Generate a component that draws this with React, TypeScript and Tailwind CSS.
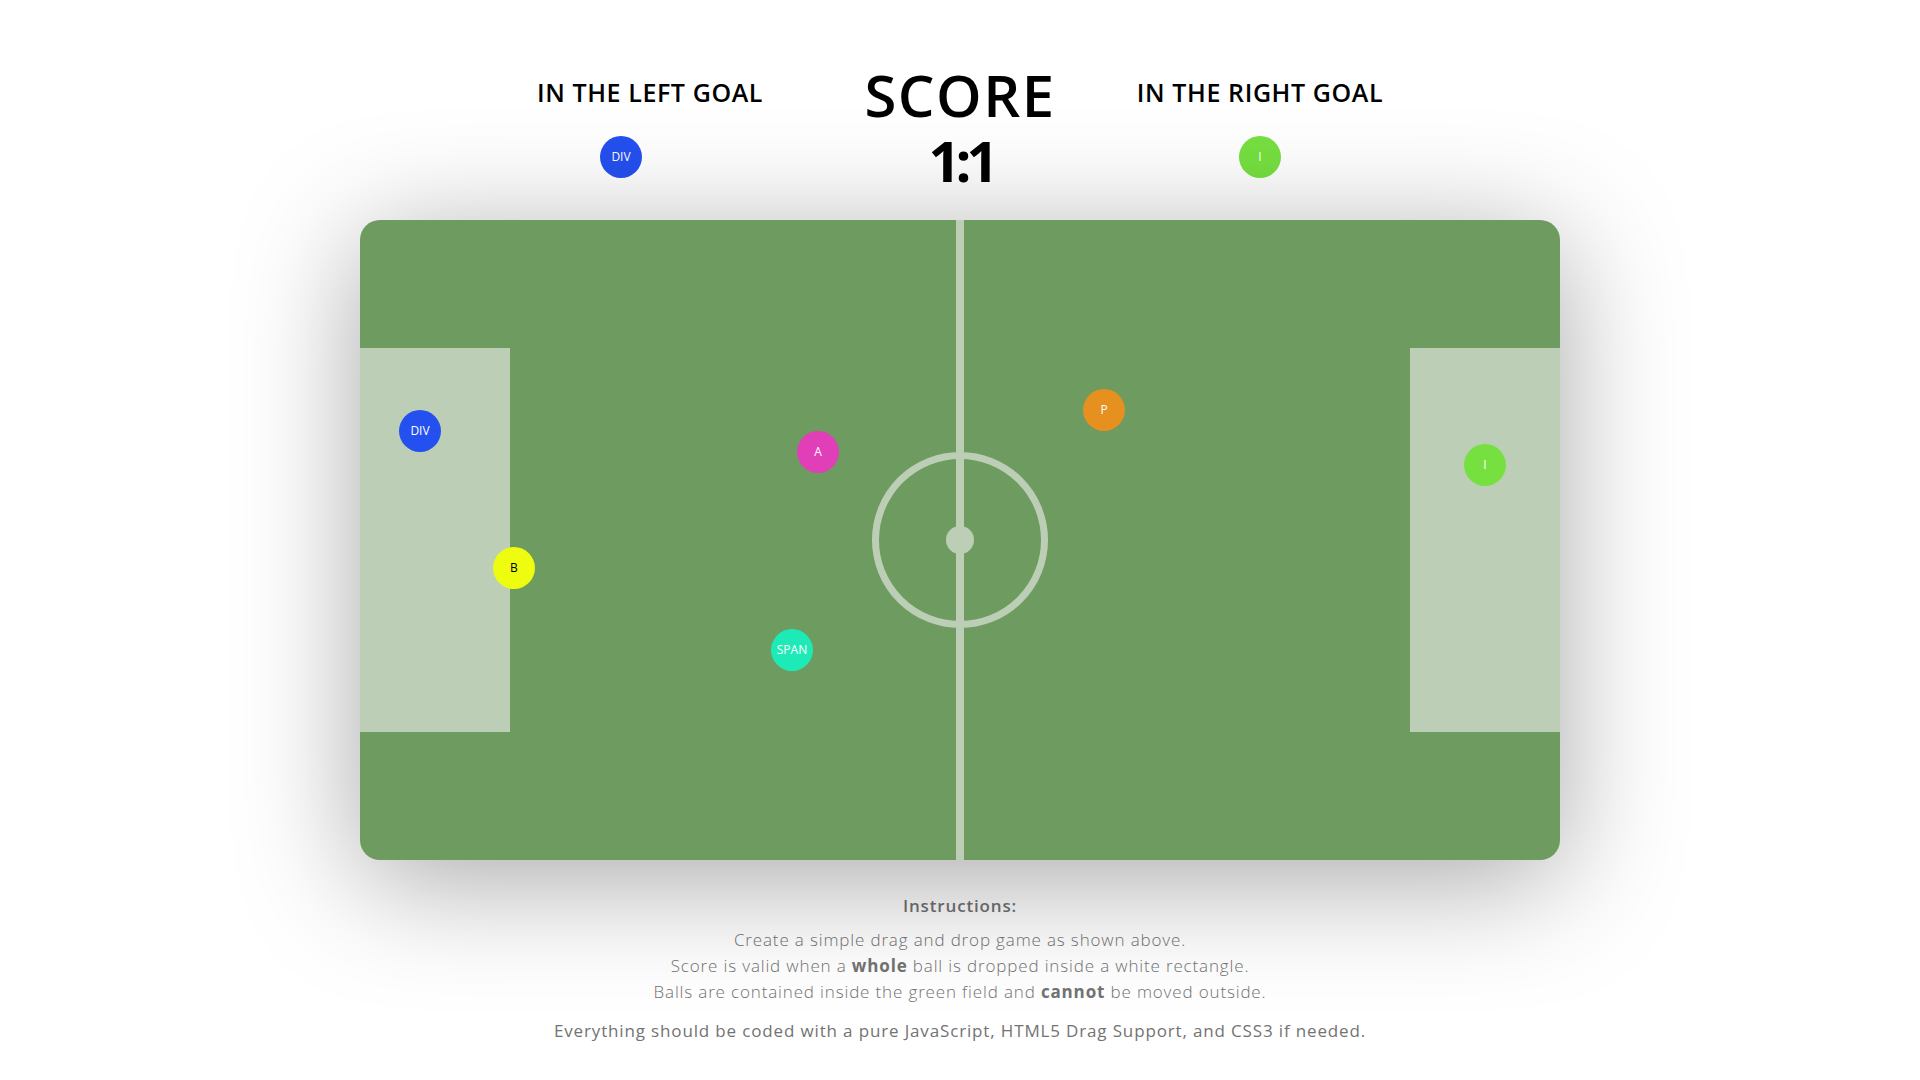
const balls = [
  { label: "DIV", cls: "left-[39px] top-[190px] bg-[#2450f0] text-white" },
  { label: "A", cls: "left-[437px] top-[211px] bg-[#e03fb8] text-white" },
  { label: "P", cls: "left-[723px] top-[169px] bg-[#e6901f] text-white" },
  { label: "I", cls: "left-[1104px] top-[224px] bg-[#76e040] text-white" },
  { label: "B", cls: "left-[133px] top-[327px] bg-[#eefc10] text-black" },
  { label: "SPAN", cls: "left-[411px] top-[409px] bg-[#1eeab8] text-white" },
];

const ballBase =
  "flex items-center justify-center w-[42px] h-[42px] rounded-full text-[12px] font-['Open_Sans',sans-serif]";

const App = () => {
  return (
    <div className="min-h-screen w-full bg-white flex flex-col items-center font-['Open_Sans',sans-serif] text-black">
      <header className="flex items-start pt-[66px] pr-[20px]">
        <div className="w-[310px] flex flex-col items-center pt-[14px]">
          <h2 className="text-[25px] leading-none font-semibold tracking-[0.6px]">IN THE LEFT GOAL</h2>
          <div className={`${ballBase} mt-[31px] mr-[58px] bg-[#2450f0] text-white`}>DIV</div>
        </div>
        <div className="w-[310px] flex flex-col items-center">
          <h1 className="text-[58px] leading-none font-semibold tracking-[1.5px]">SCORE</h1>
          <div className="text-[56px] leading-none font-bold tracking-[-5px] mt-[8px] pl-[2px]">1:1</div>
        </div>
        <div className="w-[290px] flex flex-col items-center pt-[14px]">
          <h2 className="text-[25px] leading-none font-semibold tracking-[0.6px]">IN THE RIGHT GOAL</h2>
          <div className={`${ballBase} mt-[31px] bg-[#76e040] text-white`}>I</div>
        </div>
      </header>

      <main className="relative mt-[32px] w-[1200px] h-[640px] rounded-[20px] bg-[#6e9b5f] overflow-hidden shadow-[0_20px_120px_rgba(0,0,0,0.35)]">
        {/* goals */}
        <div className="absolute left-0 top-[128px] w-[150px] h-[384px] bg-[#bccfb6]" />
        <div className="absolute right-0 top-[128px] w-[150px] h-[384px] bg-[#bccfb6]" />
        {/* middle line + circle */}
        <div className="absolute left-[596px] top-0 w-[8px] h-full bg-[#bccfb6]" />
        <div className="absolute left-[512px] top-[232px] w-[176px] h-[176px] rounded-full border-[7px] border-[#bccfb6]" />
        <div className="absolute left-[586px] top-[306px] w-[28px] h-[28px] rounded-full bg-[#bccfb6]" />

        {balls.map((b) => (
          <div key={b.label} className={`absolute ${ballBase} ${b.cls}`}>
            {b.label}
          </div>
        ))}
      </main>

      <section className="mt-[33px] text-center text-[#737373] text-[17px] leading-[26px] tracking-[0.85px]">
        <p className="font-semibold">Instructions:</p>
        <p className="mt-[8px] font-light">
          Create a simple drag and drop game as shown above.
          <br />
          Score is valid when a <b className="font-bold">whole</b> ball is dropped inside a white rectangle.
          <br />
          Balls are contained inside the green field and <b className="font-bold">cannot</b> be moved outside.
        </p>
        <p className="mt-[13px] font-medium">
          Everything should be coded with a pure JavaScript, HTML5 Drag Support, and CSS3 if needed.
        </p>
      </section>
    </div>
  );
};

export default App;
